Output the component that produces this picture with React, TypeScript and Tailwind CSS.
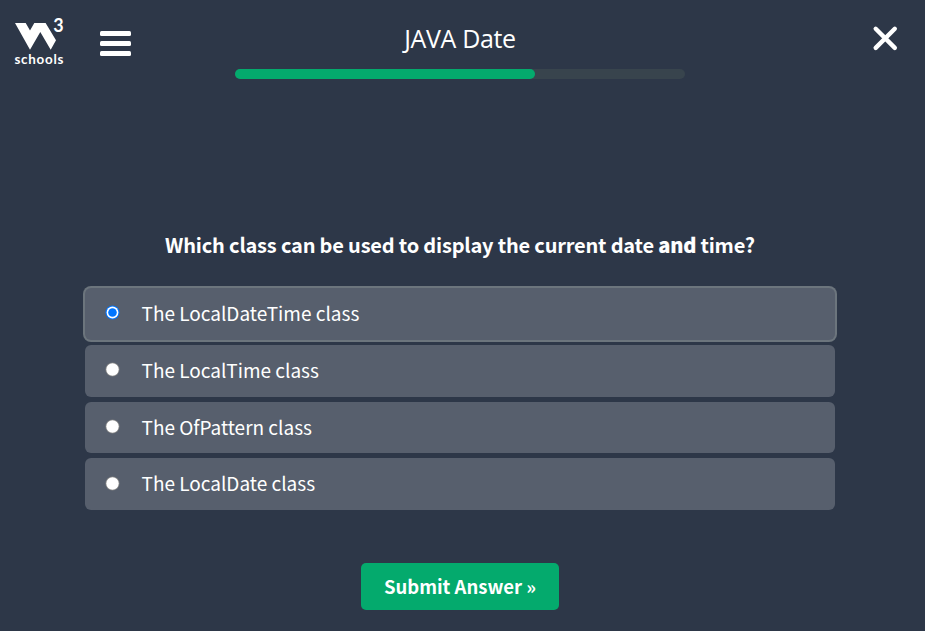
const options = [
  { label: 'The LocalDateTime class', selected: true, row: 'h-[52px]', radio: '-mt-[3px]' },
  { label: 'The LocalTime class', selected: false, row: 'h-[52px]', radio: '-mt-[3px]' },
  { label: 'The OfPattern class', selected: false, row: 'h-[51px]', radio: '-mt-[2px]' },
  { label: 'The LocalDate class', selected: false, row: 'h-[52px]', radio: '-mt-[1px]' },
];

const sans = "font-['Noto_Sans_CJK_SC','Open_Sans',sans-serif]";

function Logo() {
  return (
    <svg className="h-[66px] w-[58px] shrink-0" viewBox="0 0 58 66" fill="#fff" aria-label="W3Schools">
      <path d="M2 23H12.7L17 30.5L21.3 23H32.6L43 40.3L37.7 49.7L27.3 32L17 49.7Z" />
      <text x="40.3" y="32" textLength="10.4" lengthAdjust="spacingAndGlyphs" fontFamily="Lato, sans-serif" fontSize="18" fontWeight="700">3</text>
      <text x="1.4" y="63.6" textLength="49" lengthAdjust="spacing" fontFamily="Lato, sans-serif" fontSize="13.4" fontWeight="700">schools</text>
    </svg>
  );
}

function Radio({ checked, className }: { checked: boolean; className: string }) {
  return (
    <svg className={`size-[15px] shrink-0 ${className}`} viewBox="0 0 15 15">
      <circle cx="7.5" cy="7.5" r={checked ? 7 : 7} fill={checked ? '#0075ff' : '#858585'} />
      <circle cx="7.5" cy="7.5" r={checked ? 5.9 : 6.2} fill="#fff" />
      {checked && <circle cx="7.5" cy="7.5" r="4.3" fill="#0075ff" />}
    </svg>
  );
}

export default function App() {
  return (
    <main className={`flex h-[631px] w-[925px] flex-col overflow-hidden bg-[#2d3748] text-white ${sans}`}>
      <header className="flex h-[90px] items-start">
        <div className="flex w-[235px] pl-[13px]">
          <Logo />
          <button aria-label="Menu" className="ml-[29px] mt-[31px] flex h-[25px] w-[31px] flex-col justify-between px-[0.4px]">
            <span className="h-[5px] w-full rounded-[1.5px] bg-white" />
            <span className="h-[5.5px] w-full rounded-[1.5px] bg-white" />
            <span className="h-[5.5px] w-full rounded-[1.5px] bg-white" />
          </button>
        </div>
        <div className="w-[450px]">
          <h1 className="mt-[20px] h-9 text-center font-['Open_Sans','Noto_Sans',sans-serif] text-[25px] leading-9 font-normal tracking-[-0.35px]">JAVA Date</h1>
          <div className="mt-[13px] h-[10px] rounded-[5px] bg-[#38444d]">
            <div className="h-full w-[300px] rounded-[5px] bg-[#04aa6d]" />
          </div>
        </div>
        <button aria-label="Close" className="ml-[187px] mt-[25px]">
          <svg className="size-[27px]" viewBox="0 0 27 27" fill="none" stroke="#fff" strokeWidth="4.4" strokeLinecap="round">
            <path d="M3.7 3.8L22.8 22.9M22.8 3.8L3.7 22.9" />
          </svg>
        </button>
      </header>

      <section className="mt-[140px] flex w-[920px] flex-col items-center">
        <h2 className="h-[30px] text-center text-[20px] leading-[30px] font-bold tracking-[-0.19px] whitespace-nowrap">
          Which class can be used to display the current date <strong className="[-webkit-text-stroke:0.12px_white]">and</strong> time?
        </h2>
        <form className="mt-7 flex w-[750px] flex-col gap-[5px]">
          {options.map((option) => (
            <label
              key={option.label}
              className={`flex ${option.row} items-center rounded-[6px] bg-[#575f6d] pl-5 ${option.selected ? 'ring-2 ring-[#6c757d]' : ''}`}
            >
              <Radio checked={option.selected} className={option.radio} />
              <span className="-mt-[2px] ml-[21.5px] text-[19px] leading-[30px] whitespace-nowrap">{option.label}</span>
            </label>
          ))}
        </form>
        <button className="mt-[53px] flex h-[47px] w-[198px] items-center justify-center rounded-[5px] bg-[#04aa6d] pb-[2px] text-[18.5px] leading-[30px] font-bold whitespace-nowrap">
          Submit Answer »
        </button>
      </section>
    </main>
  );
}
